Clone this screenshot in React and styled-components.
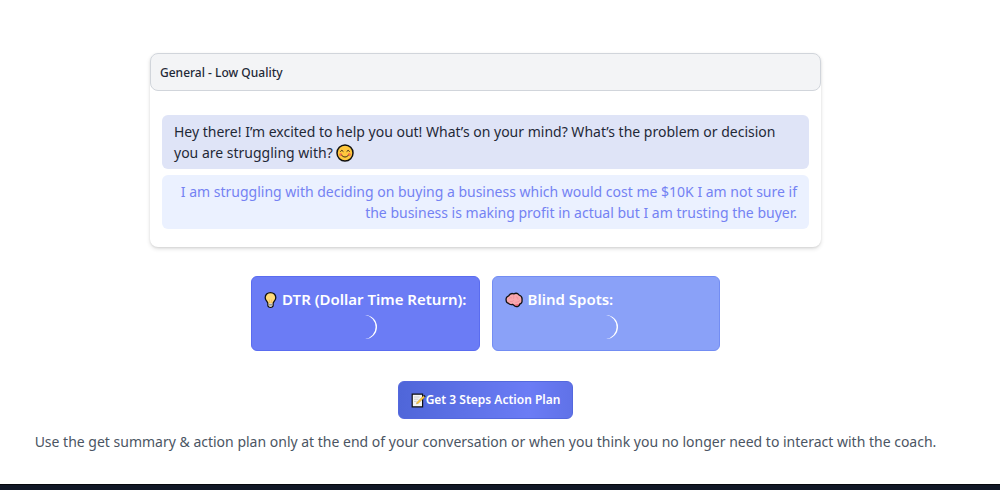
import styled, { createGlobalStyle } from "styled-components";

const messages = [
  {
    id: 1,
    from: "coach",
    text: "Hey there! I’m excited to help you out! What’s on your mind? What’s the problem or decision you are struggling with?",
    smile: true,
  },
  {
    id: 2,
    from: "user",
    text: "I am struggling with deciding on buying a business which would cost me $10K I am not sure if the business is making profit in actual but I am trusting the buyer.",
  },
];

const App = () => {
  return (
    <>
      <GlobalStyle />
      <Page>
        <Chat>
          <ChatHeader>General - Low Quality</ChatHeader>
          <Messages>
            {messages.map((message) => (
              <Message key={message.id} $from={message.from}>
                {message.text} {message.smile && <SmileIcon />}
              </Message>
            ))}
          </Messages>
        </Chat>
        <Insights>
          <Insight $color="#6b7cf5" $border="#5a6cf0">
            <InsightTitle>
              <BulbIcon /> DTR (Dollar Time Return):
            </InsightTitle>
            <Spinner />
          </Insight>
          <Insight $color="#8aa1f8" $border="#738df3">
            <InsightTitle>
              <BrainIcon /> Blind Spots:
            </InsightTitle>
            <Spinner />
          </Insight>
        </Insights>
        <ActionButton type="button">
          <MemoIcon />
          Get 3 Steps Action Plan
        </ActionButton>
        <Hint>
          Use the get summary &amp; action plan only at the end of your
          conversation or when you think you no longer need to interact with the
          coach.
        </Hint>
      </Page>
      <Footer />
    </>
  );
};

const SmileIcon = () => (
  <Emoji $width={18} $height={18} viewBox="0 0 18 18" role="img" aria-label="smile">
    <circle cx="9" cy="9" r="8" fill="#ffc83d" stroke="#111" strokeWidth="1.5" />
    <circle cx="4.7" cy="10.4" r="1.5" fill="#f5764d" />
    <circle cx="13.3" cy="10.4" r="1.5" fill="#f5764d" />
    <g fill="none" stroke="#3a2a18" strokeWidth="1" strokeLinecap="round">
      <path d="M4.5 7.3 Q5.9 5 7.2 7.3" />
      <path d="M10.8 7.3 Q12.1 5 13.5 7.3" />
      <path d="M5.7 11.4 Q9 15 12.3 11.4" />
    </g>
  </Emoji>
);

const BulbIcon = () => (
  <Emoji $width={13} $height={18} viewBox="0 0 14 18" aria-hidden="true">
    <path
      d="M7 1 C3.6 1 1.3 3.4 1.3 6.5 C1.3 9.4 4 10.6 4.2 12.8 V15 Q4.3 17 7 17 Q9.7 17 9.8 15 V12.8 C10 10.6 12.7 9.4 12.7 6.5 C12.7 3.4 10.4 1 7 1 Z"
      fill="#ffda7a"
      stroke="#111"
      strokeWidth="1.4"
    />
    <path d="M5 12.6 H9 V15 Q8.8 16.2 7 16.2 Q5.2 16.2 5 15 Z" fill="#d9dbe0" />
    <path d="M5.6 8.5 L6.3 12.5 M8.4 8.5 L7.7 12.5" stroke="#f5b04c" strokeWidth="0.7" />
    <path d="M5 14.2 H9" stroke="#555" strokeWidth="0.8" />
  </Emoji>
);

const BrainIcon = () => (
  <Emoji $width={18} $height={16} viewBox="0 0 18 16" aria-hidden="true">
    <path
      d="M1.2 8.6 C0.6 6.2 2 4.2 3.8 3.8 C4.8 1.8 7 1.2 8.8 1.8 C11 0.8 13.2 1.8 14 3 C16.2 3.8 17.4 6 17 8.2 C17.4 10.4 16 11.8 14.8 12 C14.4 13.8 12.6 15 10.8 14.4 C9.6 14.2 8.8 12.8 7.6 12.4 C5.8 12.8 4.2 12.2 3.6 11.4 C2.2 11.2 1.2 10.2 1.2 8.6 Z"
      fill="#f9a7ae"
      stroke="#111"
      strokeWidth="1.3"
    />
    <path d="M9 12.6 Q12 12.8 14.2 11.8 Q13.6 14 11.2 13.8 Z" fill="#e8485d" />
    <path
      d="M4 6.6 Q5.4 4.8 6.8 5.8 M8.4 3.4 Q9.6 5 8.6 6.4 M5 9.6 Q7.4 10.4 8.6 8.6 M11.4 4.8 Q13.4 5.2 13 7.2 M10.6 10.4 Q13.2 10.4 14.6 8.8"
      fill="none"
      stroke="#e98e99"
      strokeWidth="0.7"
      strokeLinecap="round"
    />
  </Emoji>
);

const MemoIcon = () => (
  <Emoji $width={15} $height={15} viewBox="0 0 15 15" aria-hidden="true">
    <path d="M1.2 1.2 H11.6 V13.8 H1.2 Z" fill="#f4f4f4" stroke="#111" strokeWidth="1.2" />
    <path d="M3 4 H8.6 M3 6.2 H7.4 M3 8.4 H5.6" stroke="#c6c8cc" strokeWidth="0.9" />
    <path d="M5.4 11 L6 9.2 L12.4 2.8 L13.8 4.2 L7.2 10.4 Z" fill="#ffc83d" stroke="#8a6a2a" strokeWidth="0.3" />
    <path d="M12.2 2.6 L13.2 1.7 L14.7 3.2 L13.9 4.2 Z" fill="#222" />
  </Emoji>
);

const Spinner = () => (
  <SpinnerSvg viewBox="0 0 24 24" role="img" aria-label="Loading">
    <path
      d="M12 0 A12 12 0 0 1 12 24 A12.1 12.1 0 0 0 22.6 12 A12.1 12.1 0 0 0 12 0 Z"
      fill="#fff"
    />
  </SpinnerSvg>
);

const GlobalStyle = createGlobalStyle`
  * {
    box-sizing: border-box;
  }
  body {
    margin: 0;
    background: #fff;
    color: #1f2937;
    font-family: "Segoe UI", "Noto Sans", "Open Sans", sans-serif;
    font-size: 14px;
    line-height: 21px;
  }
`;

const Page = styled.main`
  display: flex;
  flex-direction: column;
  align-items: center;
  padding: 53px 29px 32px 0;
`;

const Chat = styled.section`
  width: 100%;
  max-width: 671px;
  border-radius: 8px;
  background: #fff;
  box-shadow: 0 2px 4px rgba(0, 0, 0, 0.12), 0 1px 2px rgba(0, 0, 0, 0.08);
`;

const ChatHeader = styled.header`
  padding: 9px 9px 7px;
  border: 1px solid #d1d5db;
  border-radius: 8px;
  background: #f3f4f6;
  font-size: 12px;
  line-height: 20px;
  font-weight: 500;
`;

const Messages = styled.div`
  display: flex;
  flex-direction: column;
  gap: 6px;
  padding: 24px 12px 18px;
`;

const Message = styled.p`
  margin: 0;
  padding: 6px 12px;
  border-radius: 6px;
  background: ${(props) => (props.$from === "user" ? "#ebf1ff" : "#dfe4f7")};
  color: ${(props) => (props.$from === "user" ? "#7482f3" : "#1f2937")};
  text-align: ${(props) => (props.$from === "user" ? "right" : "left")};
`;

const Insights = styled.div`
  display: grid;
  grid-template-columns: 1fr 1fr;
  gap: 12px;
  margin: 29px 0 30px;
`;

const Insight = styled.article`
  padding: 12px 12px 11px;
  border: 1px solid ${(props) => props.$border};
  border-radius: 6px;
  background: ${(props) => props.$color};
  color: #fff;
`;

const InsightTitle = styled.h2`
  display: flex;
  align-items: center;
  gap: 5px;
  margin: 0 0 5px;
  font-size: 15px;
  line-height: 21px;
  font-weight: 600;
`;

const SpinnerSvg = styled.svg`
  display: block;
  width: 24px;
  height: 24px;
  margin: 0 auto;
`;

const ActionButton = styled.button`
  display: flex;
  align-items: center;
  padding: 9px 12px;
  border: 1px solid #5468de;
  border-radius: 6px;
  background: linear-gradient(90deg, #4f66d9, #6b7cf5 75%, #6072e8);
  color: #fff;
  font-family: inherit;
  font-size: 12px;
  line-height: 18px;
  font-weight: 600;
  cursor: pointer;
`;

const Emoji = styled.svg`
  width: ${(props) => props.$width}px;
  height: ${(props) => props.$height}px;
  vertical-align: -4px;
`;

const Hint = styled.p`
  margin: 12px 0 0;
  color: #4b5563;
  text-align: center;
`;

const Footer = styled.footer`
  height: 6px;
  border-top: 1px solid #05070c;
  background: #111827;
`;

export default App;
